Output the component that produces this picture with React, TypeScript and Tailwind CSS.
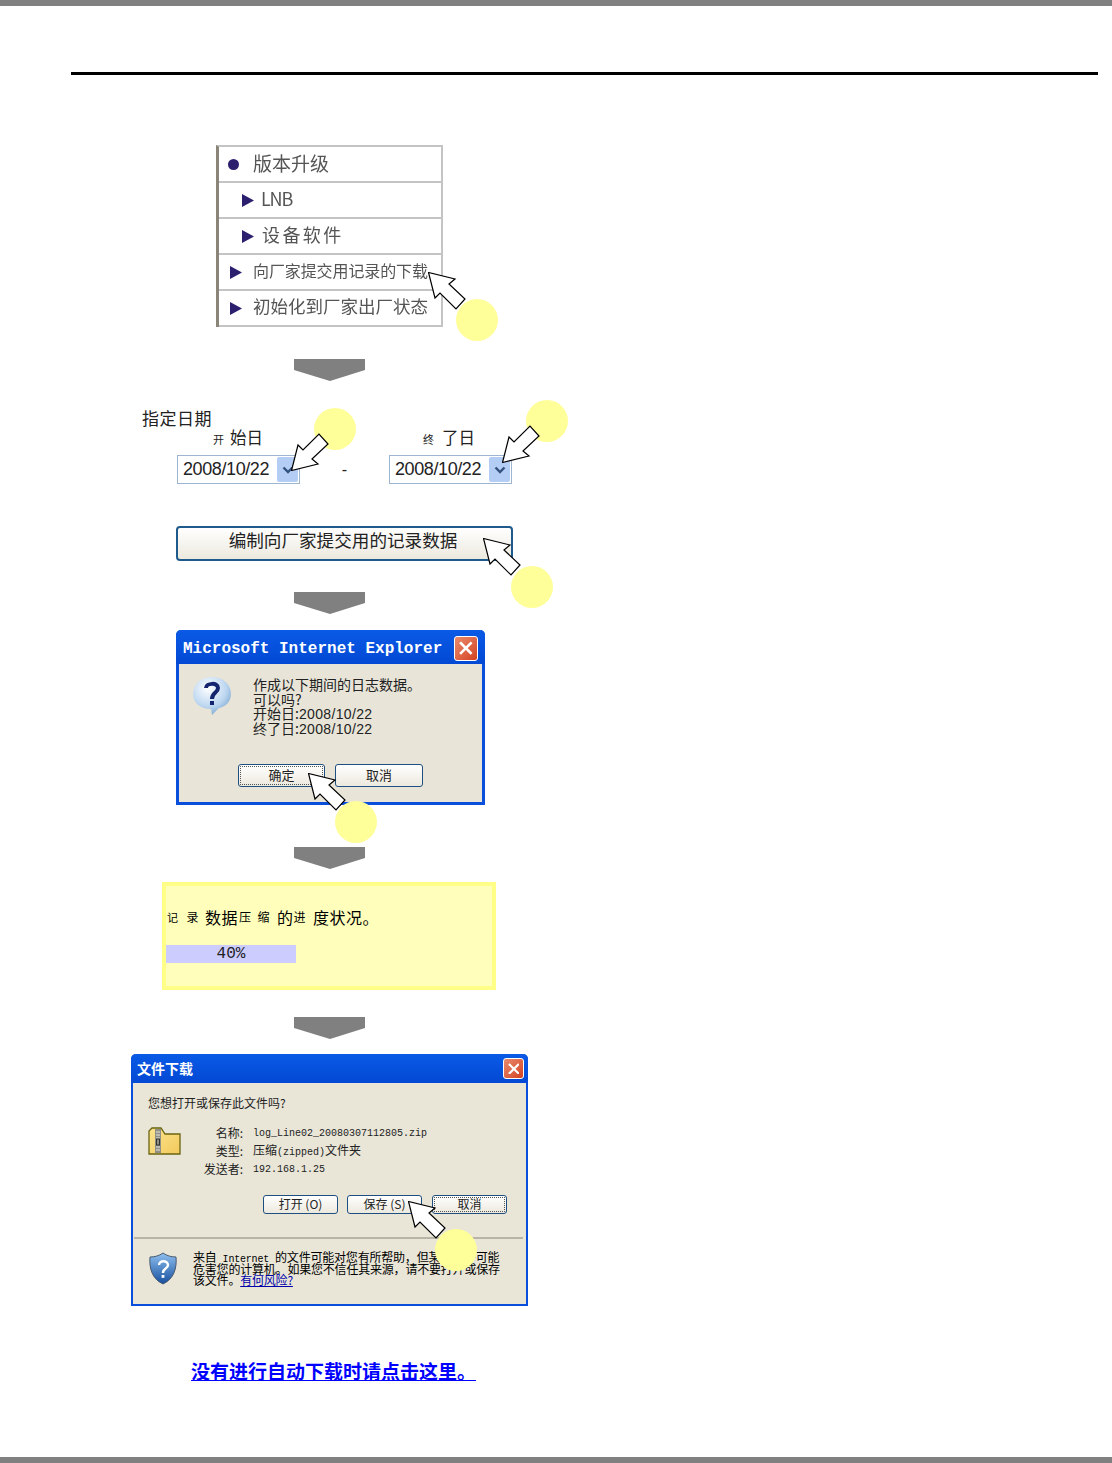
const cjk = "font-['Noto_Sans_CJK_SC','Liberation_Sans',sans-serif]";

function DownArrow({ className }: { className: string }) {
  return (
    <svg width="71" height="22" viewBox="0 0 71 22" className={`block ${className}`}>
      <polygon points="0,0 71,0 71,11 36,22 0,11" fill="#808080" />
    </svg>
  );
}

// pointer with its tip at the top left corner of the box
function Pointer({ className }: { className: string }) {
  return (
    <svg width="40" height="40" viewBox="0 0 40 40" className={`absolute origin-top-left ${className}`}>
      <polygon
        points="0.5,0.5 27,7 21,12 37,27 28,37 12,21 7,26"
        fill="#fff"
        stroke="#000"
        strokeWidth="1.2"
        strokeLinejoin="miter"
      />
    </svg>
  );
}

function Spot({ className }: { className: string }) {
  return <div className={`absolute h-[42px] w-[42px] rounded-full bg-[#ffff99] ${className}`} />;
}

function CloseBox({ className }: { className: string }) {
  return (
    <div className={`flex items-center justify-center rounded-[3px] border border-white bg-gradient-to-br from-[#e88a6c] to-[#d4401c] ${className}`}>
      <svg viewBox="0 0 14 14" className="h-[62%] w-[62%]">
        <path d="M2 2 L12 12 M12 2 L2 12" stroke="#fff" strokeWidth="2.6" strokeLinecap="square" />
      </svg>
    </div>
  );
}

function XpButton({ label, className, focus }: { label: string; className: string; focus?: boolean }) {
  return (
    <div className={`flex items-center justify-center rounded-[3px] border border-[#1f4f80] bg-gradient-to-b from-white to-[#ece9de] pb-[2px] text-[13px] leading-none text-[#222] ${focus ? "outline-1 -outline-offset-3 outline-dotted outline-[#555]" : ""} ${className}`}>
      {label}
    </div>
  );
}

function MenuRow({ indent, icon, text, label }: { indent: string; icon: "dot" | "tri"; text: string; label: string }) {
  return (
    <div className={`flex h-[36px] items-center border-b-2 border-[#c4c4c4] ${indent}`}>
      {icon === "dot" ? (
        <span className="h-[11px] w-[11px] shrink-0 rounded-full bg-[#2b1f6e]" />
      ) : (
        <svg width="12" height="13" viewBox="0 0 12 13" className="shrink-0">
          <polygon points="0,0 12,6.5 0,13" fill="#2b1f6e" />
        </svg>
      )}
      <span className={`pb-[4px] whitespace-nowrap leading-none text-[#555] blur-[0.4px] ${text}`}>{label}</span>
    </div>
  );
}

function DateBox() {
  return (
    <div className="flex h-[29px] w-[123px] items-center justify-between border border-[#9db5d0] pr-[1px] pl-[5px] font-['Liberation_Sans',sans-serif] text-[18px] leading-none tracking-[-0.4px] text-[#222]">
      <span className="pb-[2px]">2008/10/22</span>
      <span className="flex h-[25px] w-[21px] items-center justify-center rounded-[2px] bg-[#b4cdf5]">
        <svg width="12" height="8" viewBox="0 0 12 8">
          <path d="M1.5 1.5 L6 6 L10.5 1.5" fill="none" stroke="#33527f" strokeWidth="2.4" />
        </svg>
      </span>
    </div>
  );
}

export default function App() {
  return (
    <div className={`relative flex h-[1463px] w-[1112px] flex-col overflow-hidden bg-white ${cjk}`}>
      <div className="h-[6px] bg-[#808080]" />
      <div className="mt-[66px] ml-[71px] h-[3px] w-[1027px] bg-black" />

      {/* menu */}
      <div className="mt-[70px] ml-[216px] w-[227px] border-t-2 border-r-2 border-l-[3px] border-t-[#c4c4c4] border-r-[#c4c4c4] border-l-[#8a8578]">
        <MenuRow indent="pl-[9px]" icon="dot" text="ml-[14px] text-[19px]" label="版本升级" />
        <MenuRow indent="pl-[23px]" icon="tri" text="ml-[7px] text-[18px] tracking-[-1.2px]" label="LNB" />
        <MenuRow indent="pl-[23px]" icon="tri" text="ml-[8px] text-[18px] tracking-[2.4px]" label="设备软件" />
        <MenuRow indent="pl-[11px]" icon="tri" text="ml-[11px] text-[16px] tracking-[-0.1px]" label="向厂家提交用记录的下载" />
        <MenuRow indent="pl-[11px]" icon="tri" text="ml-[11px] text-[17.5px]" label="初始化到厂家出厂状态" />
      </div>

      <DownArrow className="mt-[32px] ml-[294px]" />

      {/* date range */}
      <div className="mt-[28px] ml-[142px] h-[18px] text-[17px] leading-[18px] tracking-[0.5px] text-[#222]">指定日期</div>
      <div className="mt-[1px] ml-[177px] flex h-[18px] text-[16.5px] leading-[18px] text-[#222]">
        <div className="flex w-[212px] items-baseline pl-[36px]">
          <span className="mr-[6px] text-[11px]">开</span>
          <span>始日</span>
        </div>
        <div className="flex items-baseline pl-[34px]">
          <span className="mr-[8px] text-[11px]">终</span>
          <span>了日</span>
        </div>
      </div>
      <div className="mt-[9px] ml-[177px] flex items-center">
        <DateBox />
        <span className="w-[89px] text-center font-['Liberation_Sans',sans-serif] text-[16px] text-[#222]">-</span>
        <DateBox />
      </div>

      <div className="mt-[42px] ml-[176px] flex h-[35px] w-[337px] items-center justify-center rounded-[4px] border-2 border-[#1f5a8c] bg-gradient-to-b from-white to-[#ece9de] pr-[3px] pb-[8px] text-[17.6px] leading-none text-[#222]">
        编制向厂家提交用的记录数据
      </div>

      <DownArrow className="mt-[31px] ml-[294px]" />

      {/* first dialog */}
      <div className="mt-[16px] ml-[176px] flex h-[175px] w-[309px] flex-col rounded-t-[5px] border-x-[3px] border-b-[3px] border-[#0a4fdc] bg-[#e8e5d8]">
        <div className="-mx-[3px] flex h-[34px] shrink-0 items-center justify-between rounded-t-[5px] bg-gradient-to-b from-[#0a5ae6] to-[#0349d4] px-[7px] pt-[2px]">
          <span className="pt-[2px] font-['Liberation_Mono',monospace] text-[16px] leading-none font-bold text-white">Microsoft Internet Explorer</span>
          <CloseBox className="h-[25px] w-[24px]" />
        </div>
        <div className="flex pt-[11px] pl-[13px]">
          <svg width="40" height="40" viewBox="0 0 40 40" className="mt-[1px] shrink-0">
            <defs>
              <radialGradient id="bubble" cx="0.4" cy="0.3" r="0.8">
                <stop offset="0" stopColor="#ffffff" />
                <stop offset="0.6" stopColor="#bcd6f0" />
                <stop offset="1" stopColor="#6f9cc8" />
              </radialGradient>
            </defs>
            <path d="M20 1 C31 1 39 8 39 18 C39 26 33 31 27 32 L20 39 L19 33 C9 33 1 27 1 18 C1 8 9 1 20 1 Z" fill="url(#bubble)" />
            <path d="M14 12 C14 7 26 6 26 12 C26 17 20 16 20 23" fill="none" stroke="#14246e" strokeWidth="4" />
            <rect x="18" y="25" width="4" height="4" fill="#14246e" />
          </svg>
          <div className="ml-[21px] pt-[2px] text-[14px] leading-[14.5px] text-[#222]">
            <div className="h-[14.5px]">作成以下期间的日志数据。</div>
            <div className="h-[14.5px]">可以吗?</div>
            <div className="h-[14.5px]">开始日:<span className="font-['Liberation_Sans',sans-serif] tracking-[0.35px]">2008/10/22</span></div>
            <div className="h-[14.5px]">终了日:<span className="font-['Liberation_Sans',sans-serif] tracking-[0.35px]">2008/10/22</span></div>
          </div>
        </div>
        <div className="mt-[29px] ml-[59px] flex gap-[10px]">
          <XpButton label="确定" className="h-[23px] w-[87px]" focus />
          <XpButton label="取消" className="h-[23px] w-[88px]" />
        </div>
      </div>

      <DownArrow className="mt-[42px] ml-[294px]" />

      {/* progress */}
      <div className="mt-[13px] ml-[162px] h-[108px] w-[334px] border-[4px] border-[#ffff88] bg-[#ffffbb] pt-[21px] text-black">
        <div className="flex h-[20px] items-center pl-[1px] text-[16px] leading-none tracking-[0.5px] whitespace-nowrap">
          <span className="text-[11px]">记</span>
          <span className="ml-[8px] text-[12px]">录</span>
          <span className="ml-[6px]">数据</span>
          <span className="ml-[1px] text-[12px]">压</span>
          <span className="ml-[6px] text-[12px]">缩</span>
          <span className="ml-[7px]">的</span>
          <span className="text-[12px]">进</span>
          <span className="ml-[7px]">度状况。</span>
        </div>
        <div className="mt-[18px] flex h-[18px] w-[130px] items-center justify-center bg-[#ccccff] font-['Liberation_Mono',monospace] text-[16px] leading-none text-[#222]">
          40%
        </div>
      </div>

      <DownArrow className="mt-[27px] ml-[294px]" />

      {/* download dialog */}
      <div className="mt-[15px] ml-[131px] flex h-[252px] w-[397px] flex-col rounded-t-[5px] border-x-2 border-b-2 border-[#0a4fdc] bg-[#e9e6d8] text-black">
        <div className="-mx-[2px] flex h-[29px] shrink-0 items-center justify-between rounded-t-[5px] bg-gradient-to-b from-[#0a5ae6] to-[#0349d4] pr-[4px] pl-[6px]">
          <span className="pb-[2px] text-[14px] leading-none font-bold text-white">文件下载</span>
          <CloseBox className="h-[21px] w-[21px]" />
        </div>
        <div className="mt-[13px] ml-[15px] text-[12px] leading-[14px] text-[#222]">您想打开或保存此文件吗?</div>
        <div className="mt-[14px] ml-[15px] flex">
          <svg width="33" height="28" viewBox="0 0 33 28" className="mt-[3px] shrink-0">
            <defs>
              <linearGradient id="folder" x1="0" y1="0" x2="1" y2="1">
                <stop offset="0" stopColor="#fbe58f" />
                <stop offset="1" stopColor="#f3c95c" />
              </linearGradient>
            </defs>
            <path d="M1 4 L1 27 L32 27 L32 7 L17 7 L13 1 L4 1 Z" fill="url(#folder)" stroke="#6b6410" strokeWidth="1.3" />
            <rect x="7" y="2" width="6" height="24" fill="#8f8f86" />
            <path d="M8 5 H12 M8 8 H12 M8 11 H12 M8 20 H12 M8 23 H12" stroke="#e8e8e0" strokeWidth="1" />
            <rect x="8.5" y="12" width="3" height="6" fill="none" stroke="#333" strokeWidth="1" />
          </svg>
          <div className="ml-[22px] grid grid-cols-[40px_auto] items-center gap-x-[10px] text-[12px] leading-[18px] text-[#222]">
            <span className="-ml-[4px] text-right whitespace-nowrap">名称:</span>
            <span className="h-[18px] pt-[1px] font-['Liberation_Mono',monospace] text-[10px] whitespace-nowrap">log_Line02_20080307112805.zip</span>
            <span className="-ml-[4px] text-right whitespace-nowrap">类型:</span>
            <span className="h-[18px] leading-[16px] whitespace-nowrap">压缩<span className="font-['Liberation_Mono',monospace] text-[10px]">(zipped)</span>文件夹</span>
            <span className="-ml-[4px] text-right whitespace-nowrap">发送者:</span>
            <span className="h-[18px] pt-[1px] font-['Liberation_Mono',monospace] text-[10px] whitespace-nowrap">192.168.1.25</span>
          </div>
        </div>
        <div className="mt-[17px] ml-[130px] flex gap-[9px]">
          <XpButton label="打开 (O)" className="h-[19px] w-[75px] !text-[12px]" />
          <XpButton label="保存 (S)" className="h-[19px] w-[75px] !text-[12px]" />
          <XpButton label="取消" className="ml-[1px] h-[19px] w-[75px] !text-[12px]" focus />
        </div>
        <div className="mt-[23px] ml-[1px] h-[2px] w-[389px] bg-[#b8b5a8]" />
        <div className="mt-[12px] ml-[16px] flex">
          <svg width="28" height="33" viewBox="0 0 28 33" className="mt-[1px] shrink-0">
            <defs>
              <linearGradient id="shield" x1="0" y1="0" x2="0" y2="1">
                <stop offset="0" stopColor="#8fc0f0" />
                <stop offset="1" stopColor="#174f9e" />
              </linearGradient>
            </defs>
            <path d="M14 1 C18 4 23 5 27 5 C28 16 25 27 14 32 C3 27 0 16 1 5 C5 5 10 4 14 1 Z" fill="url(#shield)" stroke="#4a5a70" strokeWidth="1" />
            <path d="M10 13 C10 8 19 8 19 13 C19 17 14 16 14 21" fill="none" stroke="#fff" strokeWidth="2.4" />
            <rect x="12.6" y="23" width="2.8" height="2.8" fill="#fff" />
          </svg>
          <div className="ml-[16px] text-[12px] leading-[11.5px] tracking-[-0.2px] whitespace-nowrap">
            <div className="h-[11.5px]">来自<span className="mx-[6px] font-['Liberation_Mono',monospace] text-[10px]">Internet</span>的文件可能对您有所帮助，但某些文件可能</div>
            <div className="h-[11.5px]">危害您的计算机。如果您不信任其来源，请不要打开或保存</div>
            <div className="h-[11.5px]">该文件。<span className="text-[#0000aa] underline">有何风险?</span></div>
          </div>
        </div>
      </div>

      <div className="mt-[53px] ml-[191px] text-[19px] leading-[24px] font-bold whitespace-nowrap text-[#0000ff] underline">
        没有进行自动下载时请点击这里。
      </div>

      <div className="mt-auto h-[6px] bg-[#808080]" />

      {/* numbered callouts lying over the captures */}
      <Spot className="top-[299px] left-[456px]" />
      <Pointer className="top-[272px] left-[428px]" />
      <Spot className="top-[408px] left-[314px]" />
      <Pointer className="top-[471px] left-[291px] -scale-y-100" />
      <Spot className="top-[400px] left-[526px]" />
      <Pointer className="top-[463px] left-[502px] -scale-y-100" />
      <Spot className="top-[566px] left-[511px]" />
      <Pointer className="top-[538px] left-[483px]" />
      <Spot className="top-[801px] left-[335px]" />
      <Pointer className="top-[773px] left-[308px]" />
      <Pointer className="top-[1201px] left-[408px]" />
      <Spot className="top-[1229px] left-[435px]" />
    </div>
  );
}
